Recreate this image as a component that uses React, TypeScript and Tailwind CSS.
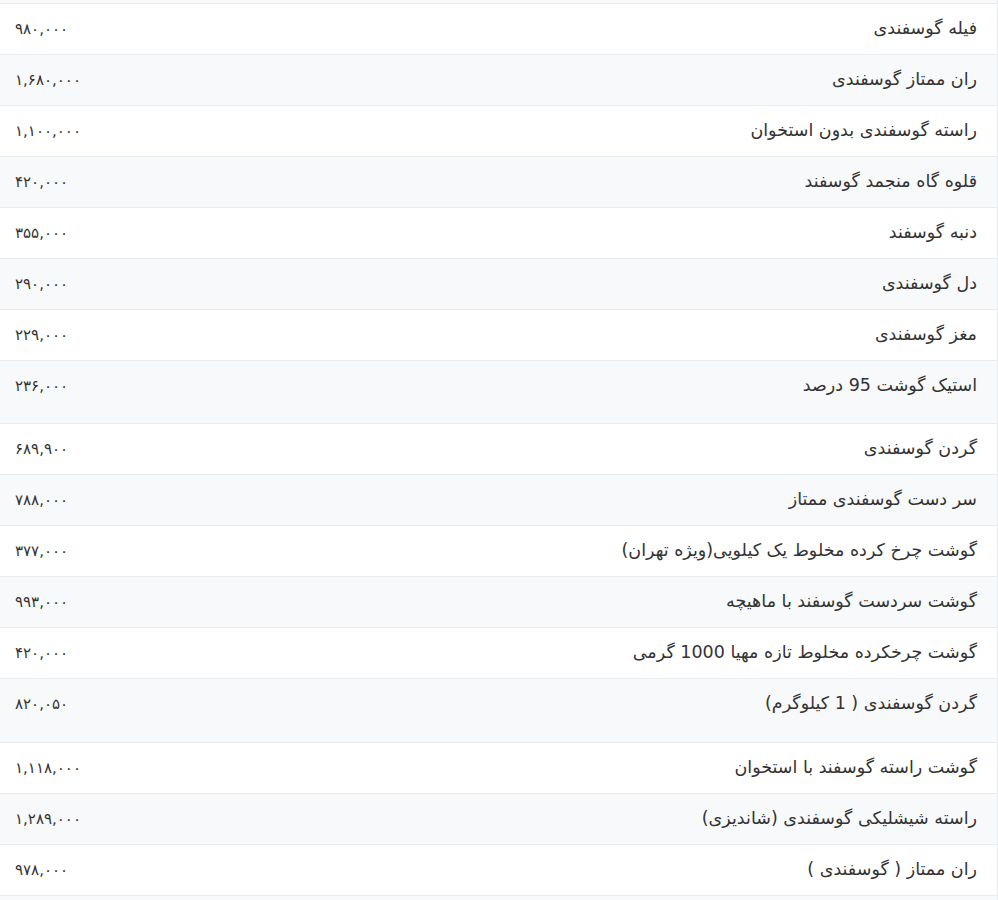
type Item = {
  name: string
  price: string
  rowHeight?: string
}

const items: Item[] = [
  { name: 'فیله گوسفندی', price: '۹۸۰,۰۰۰' },
  { name: 'ران ممتاز گوسفندی', price: '۱,۶۸۰,۰۰۰' },
  { name: 'راسته گوسفندی بدون استخوان', price: '۱,۱۰۰,۰۰۰' },
  { name: 'قلوه گاه منجمد گوسفند', price: '۴۲۰,۰۰۰' },
  { name: 'دنبه گوسفند', price: '۳۵۵,۰۰۰' },
  { name: 'دل گوسفندی', price: '۲۹۰,۰۰۰' },
  { name: 'مغز گوسفندی', price: '۲۲۹,۰۰۰' },
  { name: 'استیک گوشت 95 درصد', price: '۲۳۶,۰۰۰', rowHeight: 'h-[63px]' },
  { name: 'گردن گوسفندی', price: '۶۸۹,۹۰۰' },
  { name: 'سر دست گوسفندی ممتاز', price: '۷۸۸,۰۰۰' },
  { name: 'گوشت چرخ کرده مخلوط یک کیلویی(ویژه تهران)', price: '۳۷۷,۰۰۰' },
  { name: 'گوشت سردست گوسفند با ماهیچه', price: '۹۹۳,۰۰۰' },
  { name: 'گوشت چرخکرده مخلوط تازه مهیا 1000 گرمی', price: '۴۲۰,۰۰۰' },
  { name: 'گردن گوسفندی ( 1 کیلوگرم)', price: '۸۲۰,۰۵۰', rowHeight: 'h-[64px]' },
  { name: 'گوشت راسته گوسفند با استخوان', price: '۱,۱۱۸,۰۰۰' },
  { name: 'راسته شیشلیکی گوسفندی (شاندیزی)', price: '۱,۲۸۹,۰۰۰' },
  { name: 'ران ممتاز ( گوسفندی )', price: '۹۷۸,۰۰۰' },
]

export default function App() {
  return (
    <div
      dir="rtl"
      className="w-[998px] bg-white text-[#333333]"
      style={{ fontFamily: '"DejaVu Sans", "Noto Sans", sans-serif' }}
    >
      <div className="border-r border-[#e9ecef]">
        <div className="h-[4px] border-b border-[#e9ecef] bg-[#f8f9fa]" />
        {items.map((item, i) => (
          <div
            key={item.name}
            className={`flex items-start border-b border-[#e9ecef] ${
              i % 2 === 1 ? 'bg-[#f8f9fa]' : 'bg-white'
            } ${item.rowHeight ?? 'h-[51px]'}`}
          >
            <div className="flex-1 pr-[20px] pt-[11px] text-[17.5px] leading-[26px]">
              {item.name}
            </div>
            <div className="w-[200px] pl-[15px] pt-[12px] text-left text-[15px] leading-[26px]">
              {item.price}
            </div>
          </div>
        ))}
        <div className="h-[10px] bg-[#f8f9fa]" />
      </div>
    </div>
  )
}
